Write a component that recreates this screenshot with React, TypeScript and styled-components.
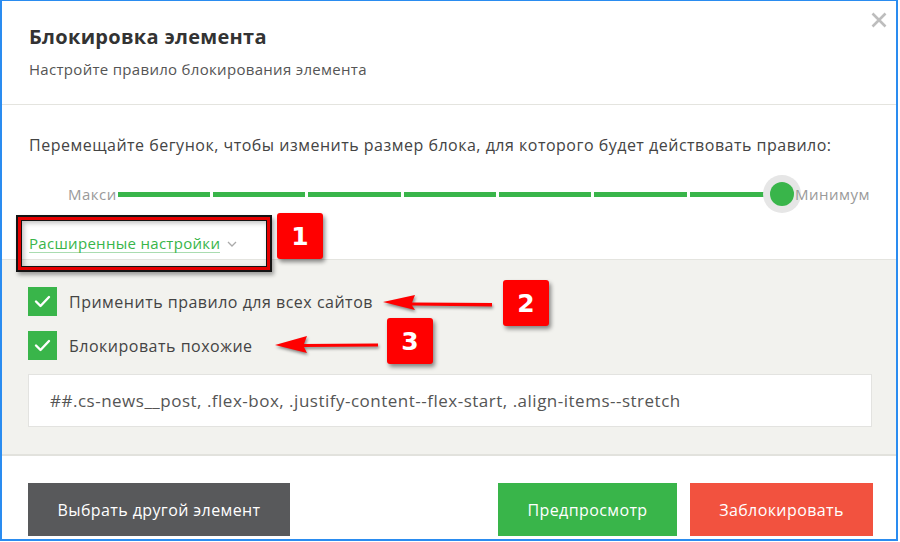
import React from "react";
import styled, { createGlobalStyle } from "styled-components";

const Global = createGlobalStyle`
  html, body { margin: 0; padding: 0; background: #ffffff; }
  body { font-family: "Open Sans", "Noto Sans", sans-serif; }
  * { box-sizing: border-box; }
`;

const Window = styled.div`
  position: relative;
  width: 898px;
  height: 541px;
  background: #fff;
  border-style: solid;
  border-color: #2a8cf0;
  border-width: 1px 2px 2px 2px;
  display: flex;
  flex-direction: column;
  overflow: hidden;
`;

const Header = styled.header`
  display: flex;
  justify-content: space-between;
  align-items: flex-start;
  height: 104px;
  padding: 22px 9px 0 27px;
  border-bottom: 1px solid #e4e4df;
`;

const TitleBlock = styled.div`
  display: flex;
  flex-direction: column;
`;

const Title = styled.h1`
  margin: 0;
  font-size: 20px;
  line-height: 28px;
  font-weight: 700;
  letter-spacing: 0.3px;
  color: #333;
`;

const Subtitle = styled.p`
  margin: 8px 0 0;
  font-size: 15px;
  line-height: 20px;
  letter-spacing: 0.3px;
  color: #555;
`;

const CloseButton = styled.button`
  border: 0;
  background: none;
  padding: 0;
  margin-top: -11px;
  width: 16px;
  height: 16px;
  display: flex;
  cursor: pointer;
`;

const SliderSection = styled.section`
  height: 155px;
  padding: 30px 26px 0 27px;
  border-bottom: 1px solid #e4e4df;
  display: flex;
  flex-direction: column;
`;

const Instruction = styled.p`
  margin: 0;
  font-size: 16px;
  line-height: 20px;
  letter-spacing: 0.5px;
  color: #444;
  white-space: nowrap;
`;

const SliderRow = styled.div`
  display: flex;
  align-items: center;
  height: 30px;
  margin: 24px 0 0 39px;
`;

const EdgeLabel = styled.span<{ $gap?: number }>`
  position: relative;
  z-index: 1;
  font-size: 15px;
  letter-spacing: 0.5px;
  color: #9a9a9a;
  white-space: nowrap;
  margin-left: ${(p) => p.$gap ?? 0}px;
`;

const Track = styled.div`
  position: relative;
  width: 674px;
  height: 5px;
  display: flex;
  gap: 3px;
  margin-left: 1px;
`;

const Segment = styled.span`
  flex: 1;
  background: #39b54a;
`;

const Knob = styled.span`
  position: absolute;
  right: -19px;
  top: 50%;
  width: 38px;
  height: 38px;
  margin-top: -19px;
  border-radius: 50%;
  background: #e6e6e6;
  display: flex;
  align-items: center;
  justify-content: center;
  &::after {
    content: "";
    width: 24px;
    height: 24px;
    border-radius: 50%;
    background: #39b54a;
  }
`;

const AdvancedRow = styled.div`
  display: flex;
  align-items: center;
  gap: 7px;
  margin-top: 25px;
`;

const AdvancedLink = styled.a`
  font-size: 15px;
  line-height: 18px;
  letter-spacing: 0.3px;
  color: #39b54a;
  text-decoration: none;
  border-bottom: 1px solid #a9dcb0;
`;

const OptionsSection = styled.section`
  background: #f2f2ee;
  padding: 27px 24px 27px 26px;
  border-bottom: 2px solid #e2e2dd;
  display: flex;
  flex-direction: column;
`;

const CheckRow = styled.label<{ $first?: boolean }>`
  display: flex;
  align-items: center;
  gap: 12px;
  margin-top: ${(p) => (p.$first ? 0 : 15)}px;
  font-size: 16px;
  letter-spacing: 0.5px;
  color: #444;
`;

const CheckBox = styled.span`
  width: 29px;
  height: 29px;
  background: #39b54a;
  display: flex;
  align-items: center;
  justify-content: center;
`;

const RuleInput = styled.div`
  margin-top: 14px;
  height: 53px;
  background: #fff;
  border: 1px solid #e3e3e0;
  display: flex;
  align-items: center;
  padding-left: 21px;
  font-size: 17px;
  letter-spacing: 0.5px;
  color: #555;
  white-space: nowrap;
`;

const Footer = styled.footer`
  flex: 1;
  display: flex;
  align-items: flex-start;
  padding: 27px 23px 0 26px;
`;

const Button = styled.button<{ $bg: string; $w: number; $ml?: number }>`
  height: 53px;
  width: ${(p) => p.$w}px;
  margin-left: ${(p) => p.$ml ?? 0}px;
  border: 0;
  background: ${(p) => p.$bg};
  color: #fff;
  font-family: "Open Sans", "Noto Sans", sans-serif;
  font-size: 16px;
  font-weight: 500;
  letter-spacing: 0.4px;
  cursor: pointer;
`;

const Spacer = styled.div`
  flex: 1;
`;

/* annotation overlays */
const Highlight = styled.div`
  position: absolute;
  left: 14px;
  top: 214px;
  width: 256px;
  height: 57px;
  border: 2px solid #141414;
  box-shadow: inset 0 0 0 3px #e60000, inset 0 0 0 4px #141414,
    inset 2px 2px 5px 4px rgba(0, 0, 0, 0.25), 2px 3px 4px rgba(0, 0, 0, 0.35);
`;

const Badge = styled.div<{ $x: number; $y: number }>`
  position: absolute;
  left: ${(p) => p.$x}px;
  top: ${(p) => p.$y}px;
  width: 46px;
  height: 46px;
  border-radius: 3px;
  background: #ff0000;
  color: #fff;
  font-family: "DejaVu Sans", "Liberation Sans", sans-serif;
  font-weight: 700;
  font-size: 25px;
  display: flex;
  align-items: center;
  justify-content: center;
  box-shadow: 2px 3px 4px rgba(0, 0, 0, 0.45);
`;

const ArrowLayer = styled.svg`
  position: absolute;
  left: 0;
  top: 0;
  pointer-events: none;
  filter: drop-shadow(1px 2px 1.5px rgba(0, 0, 0, 0.45));
`;

const Check = () => (
  <svg width="17" height="13" viewBox="0 0 17 13">
    <polyline points="2,6.5 6.5,11 15,2" fill="none" stroke="#fff" strokeWidth="2.4" strokeLinecap="round" strokeLinejoin="round" />
  </svg>
);

export default function App() {
  const segments = Array.from({ length: 7 });
  return (
    <>
      <Global />
      <Window>
        <Header>
          <TitleBlock>
            <Title>Блокировка элемента</Title>
            <Subtitle>Настройте правило блокирования элемента</Subtitle>
          </TitleBlock>
          <CloseButton aria-label="close">
            <svg width="16" height="16" viewBox="0 0 16 16">
              <path d="M1.5 1.5 L14.5 14.5 M14.5 1.5 L1.5 14.5" stroke="#bdbdbd" strokeWidth="2.6" />
            </svg>
          </CloseButton>
        </Header>

        <SliderSection>
          <Instruction>
            Перемещайте бегунок, чтобы изменить размер блока, для которого будет действовать правило:
          </Instruction>
          <SliderRow>
            <EdgeLabel>Макси</EdgeLabel>
            <Track>
              {segments.map((_, i) => (
                <Segment key={i} />
              ))}
              <Knob />
            </Track>
            <EdgeLabel $gap={13}>Минимум</EdgeLabel>
          </SliderRow>
          <AdvancedRow>
            <AdvancedLink>Расширенные настройки</AdvancedLink>
            <svg width="10" height="6" viewBox="0 0 10 6">
              <polyline points="1,1 5,5 9,1" fill="none" stroke="#aaa" strokeWidth="1.3" />
            </svg>
          </AdvancedRow>
        </SliderSection>

        <OptionsSection>
          <CheckRow $first>
            <CheckBox>
              <Check />
            </CheckBox>
            Применить правило для всех сайтов
          </CheckRow>
          <CheckRow>
            <CheckBox>
              <Check />
            </CheckBox>
            Блокировать похожие
          </CheckRow>
          <RuleInput>##.cs-news__post, .flex-box, .justify-content--flex-start, .align-items--stretch</RuleInput>
        </OptionsSection>

        <Footer>
          <Button $bg="#58595b" $w={262}>Выбрать другой элемент</Button>
          <Spacer />
          <Button $bg="#39b54a" $w={179}>Предпросмотр</Button>
          <Button $bg="#f2523f" $w={183} $ml={13}>Заблокировать</Button>
        </Footer>

        <Highlight />
        <Badge $x={275} $y={212}>1</Badge>
        <Badge $x={501} $y={279}>2</Badge>
        <Badge $x={385} $y={317}>3</Badge>
        <ArrowLayer width="898" height="541" viewBox="0 0 898 541">
          <g fill="#ff0000">
            <path d="M490 302 L410 301.5 L413 294 L381 301 L413 309 L410 304.5 L490 305.5 Z" />
            <path d="M376 342.5 L302 343 L305 335 L273 344 L305 352 L302 346 L376 345.5 Z" />
          </g>
        </ArrowLayer>
      </Window>
    </>
  );
}
